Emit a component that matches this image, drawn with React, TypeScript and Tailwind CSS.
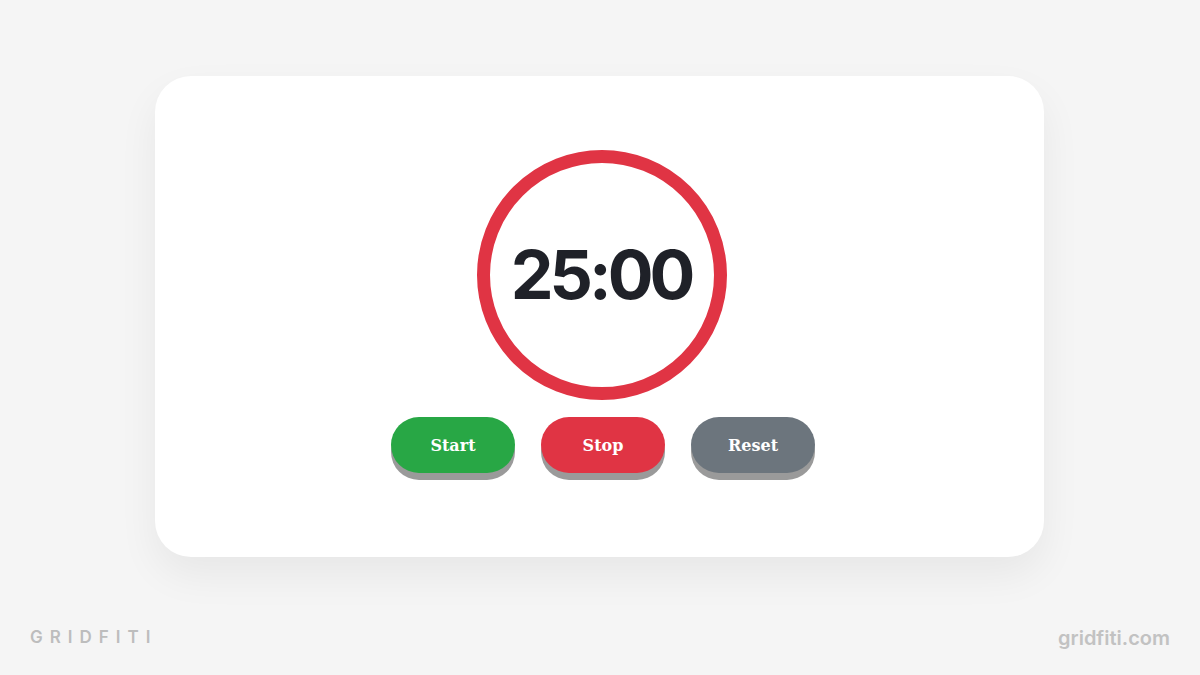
export default function App() {
  return (
    <div className="h-[675px] w-[1200px] bg-[#f5f5f5] flex flex-col font-['Inter',sans-serif]">
      {/* Card */}
      <div className="ml-[155px] mt-[76px] w-[889px] h-[481px] bg-white rounded-[36px] shadow-[0_18px_40px_rgba(0,0,0,0.06)] flex flex-col items-center pt-[74px]">
        <div className="ml-[5px] w-[250px] h-[250px] rounded-full border-[13px] border-[#e03444] flex items-center justify-center">
          <span className="text-[68px] font-bold text-[#1f2128] tracking-[-4px] leading-none pb-[2px] pr-[2px]">
            25:00
          </span>
        </div>

        <div className="mt-[17px] flex gap-[26px] ml-[7px]">
          <button className="w-[124px] h-[56px] rounded-full bg-[#28a745] text-white text-[16px] font-bold font-['DejaVu_Serif',serif] shadow-[0_7px_0_#9a9a9a] pt-[2px]">
            Start
          </button>
          <button className="w-[124px] h-[56px] rounded-full bg-[#e03444] text-white text-[16px] font-bold font-['DejaVu_Serif',serif] shadow-[0_7px_0_#9a9a9a] pt-[2px]">
            Stop
          </button>
          <button className="w-[124px] h-[56px] rounded-full bg-[#6c757d] text-white text-[16px] font-bold font-['DejaVu_Serif',serif] shadow-[0_7px_0_#9a9a9a] pt-[2px]">
            Reset
          </button>
        </div>
      </div>

      {/* Footer */}
      <div className="mt-auto mb-[22px] px-[30px] flex items-center justify-between">
        <span className="text-[17px] font-semibold tracking-[7px] text-[#bdbdbd]">GRIDFITI</span>
        <span className="text-[20px] font-semibold text-[#c2c2c2]">gridfiti.com</span>
      </div>
    </div>
  );
}
